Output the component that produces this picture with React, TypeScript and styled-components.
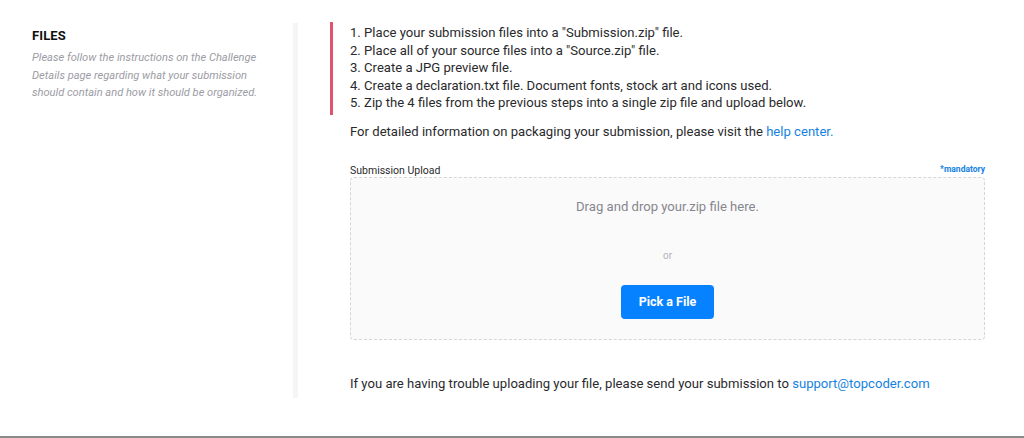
import React from "react";
import styled, { createGlobalStyle } from "styled-components";

const Global = createGlobalStyle`
  html, body { margin: 0; padding: 0; background: #ffffff; }
  body { font-family: Roboto, "Noto Sans", Arial, sans-serif; }
  * { box-sizing: border-box; }
`;

const Page = styled.div`
  width: 1024px;
  height: 438px;
  border-bottom: 2px solid #8a8a8a;
  padding-top: 22px;
`;

const Row = styled.div`
  display: flex;
  align-items: flex-start;
`;

const Side = styled.div`
  width: 293px;
  padding: 6px 30px 0 32px;
`;

const SideTitle = styled.h2`
  margin: 0;
  font-size: 13px;
  font-weight: 700;
  color: #111;
  line-height: 16px;
  letter-spacing: 0.1px;
`;

const SideText = styled.p`
  margin: 5px 0 0;
  font-size: 11.1px;
  font-style: italic;
  line-height: 17.5px;
  color: #9c9ca4;
`;

const Divider = styled.div`
  width: 5px;
  height: 375px;
  margin-top: 1px;
  background: #f5f5f6;
`;

const Main = styled.div`
  flex: 1;
  padding: 0 39px 0 32px;
`;

const Steps = styled.ol`
  margin: 0;
  padding: 2px 0 3px 17px;
  list-style: none;
  border-left: 3px solid #e0536f;
`;

const Step = styled.li`
  font-size: 13.1px;
  line-height: 17.5px;
  color: #2a2a2c;
`;

const Para = styled.p<{ $top: number }>`
  margin: ${(p) => p.$top}px 0 0 20px;
  font-size: 13.1px;
  line-height: 18px;
  color: #2a2a2c;
`;

const Link = styled.a`
  color: #1582e0;
  text-decoration: none;
`;

const UploadHead = styled.div`
  display: flex;
  justify-content: space-between;
  align-items: flex-end;
  margin: 23px 0 0 20px;
  height: 13px;
`;

const Label = styled.span`
  font-size: 10.5px;
  color: #2a2a2c;
  line-height: 13px;
`;

const Mandatory = styled.span`
  font-size: 8.5px;
  font-weight: 700;
  color: #1582e0;
  line-height: 13px;
  margin-top: -1px;
  align-self: flex-start;
`;

const Drop = styled.div`
  margin: 0 0 0 20px;
  height: 163px;
  border: 1px dashed #d6d6da;
  border-radius: 4px;
  background: #fafafb;
  display: flex;
  flex-direction: column;
  align-items: center;
  padding-top: 20px;
`;

const DropText = styled.div`
  font-size: 13.1px;
  line-height: 18px;
  color: #86868e;
`;

const Or = styled.div`
  margin-top: 34px;
  font-size: 10px;
  line-height: 12px;
  color: #b4b4ba;
`;

const Button = styled.button`
  margin-top: 23px;
  width: 93px;
  height: 34px;
  border: none;
  border-radius: 4px;
  background: #0681ff;
  color: #fff;
  font-family: Roboto, "Noto Sans", Arial, sans-serif;
  font-size: 12.5px;
  font-weight: 700;
  cursor: pointer;
`;

export default function App() {
  return (
    <>
      <Global />
      <Page>
        <Row>
          <Side>
            <SideTitle>FILES</SideTitle>
            <SideText>
              Please follow the instructions on the Challenge Details page regarding what your
              submission should contain and how it should be organized.
            </SideText>
          </Side>
          <Divider />
          <Main>
            <Steps>
              <Step>1. Place your submission files into a "Submission.zip" file.</Step>
              <Step>2. Place all of your source files into a "Source.zip" file.</Step>
              <Step>3. Create a JPG preview file.</Step>
              <Step>4. Create a declaration.txt file. Document fonts, stock art and icons used.</Step>
              <Step>5. Zip the 4 files from the previous steps into a single zip file and upload below.</Step>
            </Steps>
            <Para $top={8}>
              For detailed information on packaging your submission, please visit the{" "}
              <Link href="#">help center.</Link>
            </Para>
            <UploadHead>
              <Label>Submission Upload</Label>
              <Mandatory>*mandatory</Mandatory>
            </UploadHead>
            <Drop>
              <DropText>Drag and drop your.zip file here.</DropText>
              <Or>or</Or>
              <Button>Pick a File</Button>
            </Drop>
            <Para $top={35}>
              If you are having trouble uploading your file, please send your submission to{" "}
              <Link href="#">support@topcoder.com</Link>
            </Para>
          </Main>
        </Row>
      </Page>
    </>
  );
}
